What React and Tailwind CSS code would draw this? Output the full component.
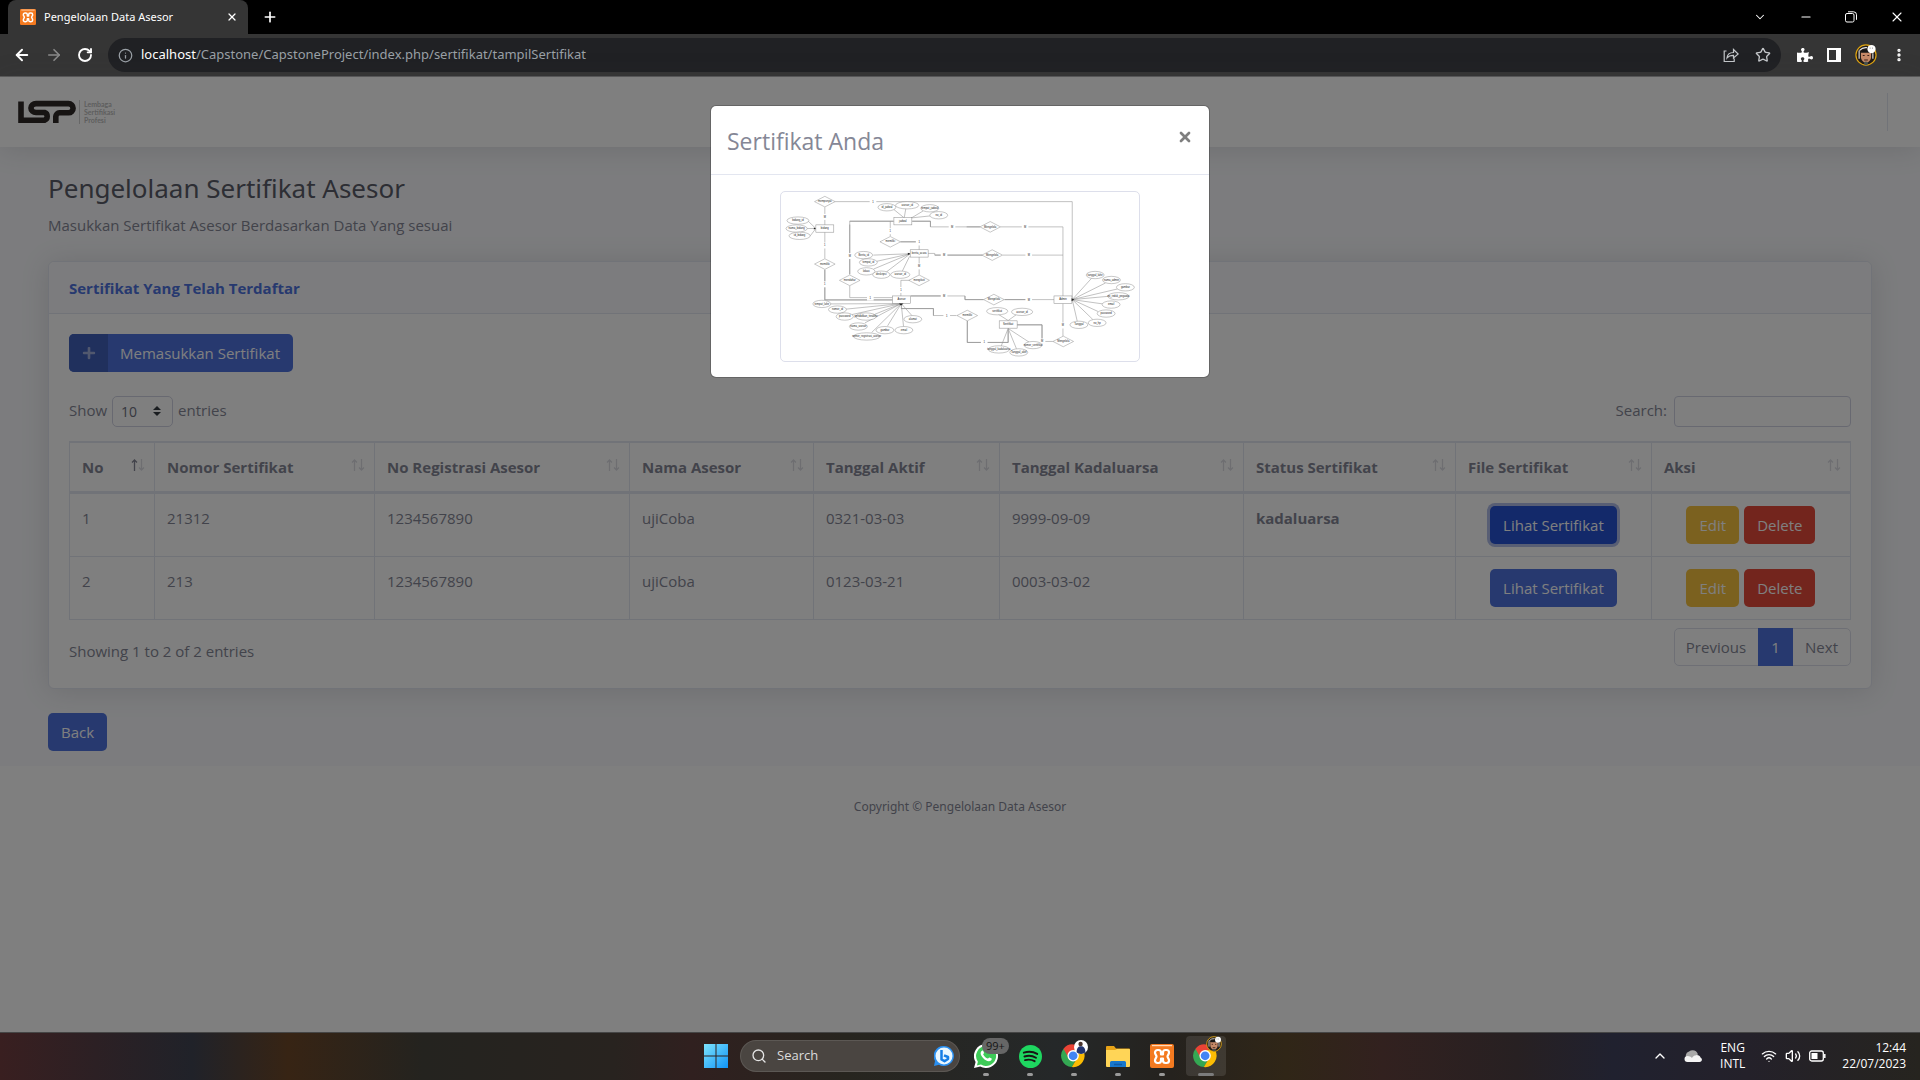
import React from "react";
import {
  ArrowLeft, ArrowRight, RotateCw, Info, X, Plus, Star, ChevronDown, ChevronUp, Minus,
  EllipsisVertical, Search, Wifi, Volume2,
} from "lucide-react";
import { FaPlus, FaPuzzlePiece } from "react-icons/fa";

const columns = [
  ["No", 85, true],
  ["Nomor Sertifikat", 220],
  ["No Registrasi Asesor", 255],
  ["Nama Asesor", 184],
  ["Tanggal Aktif", 186],
  ["Tanggal Kadaluarsa", 244],
  ["Status Sertifikat", 212],
  ["File Sertifikat", 196],
  ["Aksi", 199],
];

const rows = [
  { cells: ["1", "21312", "1234567890", "ujiCoba", "0321-03-03", "9999-09-09"], status: "kadaluarsa", active: true },
  { cells: ["2", "213", "1234567890", "ujiCoba", "0123-03-21", "0003-03-02"], status: "", active: false },
];

const lines = [
  "M404 303H1118V598M373 320V373M373 395V474M373 508V599H577M321 360L346 384L329 406M320 384H346",
  "M580 362H448V522M448 556V592H577M570 362V407M601 424H648M657 427V448M657 470V523M630 540H602V587",
  "M636 362H691V379H840M902 379H1090V587M684 459H704V464H847M909 464H1090",
  "M580 326L612 352L617 323M634 352L669 331M634 352L690 346",
  "M519 464L630 460L528 483M630 460L520 506M630 460L558 515M628 468L606 513",
  "M631 587H795V598H851M914 598H1064M603 610V625H700V646H770M802 662V727H925V685",
  "M603 610L390 611M603 610L434 627M603 610L455 643M603 610L524 642M603 610L494 668M603 610L514 697M603 610L562 677M603 610L610 679M603 610L636 647",
  "M895 642L925 661L950 643M952 674H1027V724H1060M1090 610V708",
  "M925 685L904 738M925 685L950 746M925 685L988 726",
  "M1118 598L1176 534M1118 598L1218 548M1118 598L1254 566M1118 598L1228 588M1118 598L1210 611M1118 598L1196 634M1118 598L1180 658M1118 598L1133 663",
];

const heavyLines = "M373 508V599H577M448 372V522M580 362H448M636 362H691V379M704 464H847M601 424H648M631 587H740M795 587V598H851M603 625H700V646M802 662V727H925V690M952 674H1027V724M800 379H840M914 598H990";

const diamonds = [
  [373, 303, "mempunyai"], [373, 491, "memiliki"], [448, 540, "mendaftar"], [570, 424, "memiliki"],
  [657, 540, "mengikuti"], [871, 379, "Mengelola"], [877, 464, "Mengelola"], [882, 598, "Mengelola"],
  [802, 646, "memiliki"], [1091, 724, "Mengelola"],
];

const boxes = [
  [373, 384, "bidang"], [608, 362, "jadwal"], [657, 459, "berita_acara"],
  [604, 598, "Asesor"], [1090, 598, "Admin"], [925, 673, "Sertifikat"],
];

const ellipses = [
  [292, 360, 33, "bidang_id"], [288, 384, 32, "nama_bidang"], [297, 406, 32, "id_bidang"],
  [560, 320, 27, "id_jadwal"], [621, 314, 35, "asesor_id"], [689, 323, 27, "tempat_jadwal"], [716, 344, 27, "no_id"],
  [490, 464, 27, "Berita_id"], [504, 486, 27, "tempat_id"], [498, 513, 26, "lokasi"], [543, 523, 26, "deskripsi"], [600, 523, 29, "asesor_id"],
  [364, 611, 27, "tempat_lahir"], [411, 628, 27, "nomor_id"], [433, 649, 26, "password"], [497, 649, 31, "pendidikan_terakhir"],
  [474, 679, 27, "nama_asesor"], [499, 709, 40, "nomor_registrasi_asesor"], [554, 690, 27, "gambar"], [611, 690, 27, "email"], [638, 657, 27, "alamat"],
  [1187, 524, 27, "tanggal_lahir"], [1236, 539, 27, "nama_admin"], [1278, 561, 27, "gambar"], [1257, 588, 32, "no_induk_pegawai"],
  [1235, 613, 27, "email"], [1220, 640, 27, "password"], [1193, 668, 27, "no_hp"], [1138, 674, 27, "Tanggal"],
  [892, 633, 32, "sertifikat"], [967, 635, 32, "asesor_id"], [897, 748, 32, "tanggal_kadaluarsa"],
  [957, 757, 27, "Tanggal_aktif"], [1000, 735, 27, "nomor_sertifikat"],
];

const marks = [
  [518, 303, "1"], [373, 349, "M"], [373, 435, "1"], [373, 552, "1"], [448, 467, "M"], [510, 592, "1"], [570, 392, "1"],
  [657, 426, "1"], [657, 498, "M"], [602, 569, "1"], [756, 379, "M"], [976, 379, "M"], [732, 464, "M"], [987, 464, "M"],
  [732, 587, "M"], [987, 598, "M"], [740, 646, "1"], [853, 727, "1"], [1027, 724, "M"], [1090, 676, "M"],
];

function Diagram() {
  return (
    <svg role="img" aria-label="Sertifikat" viewBox="241 274 1078 508" className="block h-auto w-full" fontFamily="Liberation Sans, sans-serif" fontSize="8" textAnchor="middle" fill="#222">
      <g fill="none" stroke="#8c8c8c" strokeWidth="1.6">
        {lines.map((d) => <path key={d} d={d} />)}
        <path d={heavyLines} strokeWidth="2.4" stroke="#959595" />
      </g>
      {marks.map(([x, y, t], i) => (
        <g key={i}>
          <rect x={x - 10} y={y - 9} width="20" height="18" fill="#fff" />
          <text x={x} y={y + 3}>{t}</text>
        </g>
      ))}
      {diamonds.map(([x, y, t], i) => (
        <g key={i}>
          <path d={`M${x - 31} ${y}L${x} ${y - 16}L${x + 31} ${y}L${x} ${y + 16}Z`} fill="#fff" stroke="#888" strokeWidth="1.4" />
          <text x={x} y={y + 2}>{t}</text>
        </g>
      ))}
      {ellipses.map(([x, y, r, t], i) => (
        <g key={i}>
          <ellipse cx={x} cy={y} rx={r} ry="11" fill="#fff" stroke="#888" strokeWidth="1.4" />
          <text x={x} y={y + 2}>{t}</text>
        </g>
      ))}
      {boxes.map(([x, y, t], i) => (
        <g key={i}>
          <rect x={x - 27} y={y - 11} width="54" height="22" fill="#fff" stroke="#888" strokeWidth="1.5" />
          <text x={x} y={y + 2}>{t}</text>
        </g>
      ))}
      <path d="M1116 594l8 4l-8 5zM596 610h14l-8 6zM623 457l7 3l-7 4zM340 381l6 3l-6 3z" fill="#222" />
    </svg>
  );
}

function XamppIcon({ className }) {
  return (
    <svg viewBox="0 0 24 24" className={className} aria-hidden="true">
      <rect width="24" height="24" rx="2" fill="#f47a20" />
      <rect x="2" y="1" width="20" height="1.2" fill="#ffd9b8" />
      <path d="M5 8.500A2.500 2.500 0 0 1 7.500 6H8.500A2.500 2.500 0 0 1 11 8.500V10.500H13V8.500A2.500 2.500 0 0 1 15.500 6H16.500A2.500 2.500 0 0 1 19 8.500C19 10.500 17.500 11 17.500 12.500S19 14.500 19 16.500A2.500 2.500 0 0 1 16.500 19H15.500A2.500 2.500 0 0 1 13 16.500V14.500H11V16.500A2.500 2.500 0 0 1 8.500 19H7.500A2.500 2.500 0 0 1 5 16.500C5 14.500 6.500 14 6.500 12.500S5 10.500 5 8.500Z" fill="#f47a20" stroke="#fff" strokeWidth="2.200" strokeLinejoin="round" />
    </svg>
  );
}

function ChromeIcon({ className, children }) {
  return (
    <svg viewBox="0 0 32 32" className={className} aria-hidden="true">
      <path d="M4 10A13 13 0 0 0 13.500 30.900L19.500 21Z" fill="#34a853" />
      <path d="M26.300 11.500A13 13 0 0 1 13.500 30.900L20.500 19L15 11.500Z" fill="#fbbc04" />
      <path d="M4 10A13 13 0 0 1 15 5C20 5 24.500 7.500 26.300 11.500H15L9.500 20Z" fill="#ea4335" />
      <circle cx="15" cy="18" r="6.500" fill="#fff" />
      <circle cx="15" cy="18" r="5" fill="#4285f4" />
      {children}
    </svg>
  );
}

function Face({ className }) {
  return (
    <svg viewBox="0 0 24 24" className={className} aria-hidden="true">
      <circle cx="12" cy="12" r="11" fill="#221c18" stroke="#e0a512" strokeWidth="1.300" />
      <path d="M4.500 7v9M19.500 10v6M5 7a9 9 0 0 1 8-3" stroke="#e8e8e8" strokeWidth="1.200" fill="none" />
      <path d="M6.500 9.500c1-3 10-3 11 0v5c0 3-3 6-5.500 6s-5.500-3-5.500-6z" fill="#c68a68" />
      <path d="M6.500 9.500C7 5 17 5 17.500 9.500z" fill="#171717" />
      <path d="M8.500 12.500h2M13.500 12.500h2M10 17.500h4" stroke="#3b2018" strokeWidth="1.200" />
      <path d="M9.500 20l2.500-1 2.500 1-1 3h-3z" fill="#4a5450" />
      <circle cx="18" cy="5.500" r="4.500" fill="#fff" />
      <path d="M16 4.500h1M18.500 4.500h1" stroke="#777" strokeWidth="1" />
    </svg>
  );
}

function TitleBar() {
  return (
    <header className="bg-black text-white">
      <div className="flex h-[34px] items-center pl-2">
        <div className="flex h-full w-60 items-center rounded-t-lg bg-[#353535] pl-3 pr-2.5">
          <XamppIcon className="size-4" />
          <span className="ml-2 flex-1 font-['Noto_Sans',sans-serif] text-[11px]">Pengelolaan Data Asesor</span>
          <button aria-label="Tutup tab"><X className="size-3" strokeWidth={2.500} /></button>
        </div>
        <button aria-label="Tab baru" className="ml-3.5"><Plus className="size-4" strokeWidth={2.500} /></button>
        <div className="ml-auto flex items-center gap-8 pr-[15px]">
          <button aria-label="Cari tab"><ChevronDown className="size-3.5" strokeWidth={1.800} /></button>
          <button aria-label="Perkecil"><Minus className="size-3.5" strokeWidth={1.800} /></button>
          <button aria-label="Pulihkan">
            <svg viewBox="0 0 12 12" className="size-3" fill="none" stroke="currentColor"><rect x=".5" y="2.500" width="8.500" height="8.500" rx="1.500" /><path d="M3 .8h5.500a3 3 0 0 1 3 3v5" /></svg>
          </button>
          <button aria-label="Tutup"><X className="size-4" strokeWidth={1.600} /></button>
        </div>
      </div>
      <div className="flex h-[43px] items-center border-b border-[#5a5a5a] bg-[#353535] px-[13px]">
        <button aria-label="Kembali"><ArrowLeft className="size-[18px]" strokeWidth={2.600} /></button>
        <button aria-label="Maju" className="ml-3.5 text-[#8a8a8a]"><ArrowRight className="size-[18px]" strokeWidth={2.200} /></button>
        <button aria-label="Muat ulang" className="ml-3.5"><RotateCw className="size-4" strokeWidth={2.800} /></button>
        <div className="ml-[15px] flex h-[34px] flex-1 items-center rounded-full bg-[#202124] pl-2.5 pr-2.5">
          <Info className="size-[15px] text-[#9aa0a6]" />
          <span className="ml-2 font-['Noto_Sans',sans-serif] text-[13px] text-[#9aa0a6]"><span className="text-white">localhost</span>/Capstone/CapstoneProject/index.php/sertifikat/tampilSertifikat</span>
          <div className="ml-auto flex items-center gap-4 text-[#c4c7ca]">
            <button aria-label="Bagikan">
              <svg viewBox="0 0 16 16" className="size-4" fill="none" stroke="currentColor" strokeWidth="1.200"><path d="M3.500 4H1.200v10.500h10V11.500M4 11c.3-4 3-5.500 6.500-5.500V2.500L15.200 7l-4.700 4V8.300C7.500 8.300 5.500 9 4 11z" /></svg>
            </button>
            <button aria-label="Tandai"><Star className="size-4" /></button>
          </div>
        </div>
        <div className="ml-4 flex items-center gap-3.5">
          <button aria-label="Ekstensi"><FaPuzzlePiece className="size-4" /></button>
          <button aria-label="Panel samping">
            <svg viewBox="0 0 14 14" className="size-3.5"><path fill="#fff" fillRule="evenodd" d="M0 0h14v14H0zM2 2v10h7V2z" /></svg>
          </button>
          <button aria-label="Profil"><Face className="size-[22px]" /></button>
          <button aria-label="Menu"><EllipsisVertical className="size-4" strokeWidth={3} /></button>
        </div>
      </div>
    </header>
  );
}

function Logo() {
  return (
    <div className="flex items-center" aria-label="LSP">
      <svg viewBox="0 0 58 24" className="h-6 w-[58px]" fill="none" stroke="#2e2827" strokeWidth="5.600">
        <path d="M3 1.500V20.200H26.500A3.700 4 0 0 0 26.500 12.500H18A5 4.400 0 0 1 18 3.600H50.500A4.600 4.600 0 0 1 50.500 12.800H41.500A4 4 0 0 0 37.800 16.500V23" />
      </svg>
      <div className="ml-[3px] h-6 w-px bg-[#cfcfcf]" />
      <div className="ml-1 font-[Lato,sans-serif] text-[7px] font-bold leading-[8px] text-[#bdbdbd]">
        <div>Lembaga</div><div>Sertifikasi</div><div>Profesi</div>
      </div>
    </div>
  );
}

function SortArrows({ active }) {
  return (
    <svg viewBox="0 0 14 12" className="mb-1 h-3 w-3.5 shrink-0" fill="none" aria-hidden="true">
      <path d="M3.500 12V1M1 3.500L3.500 1L6 3.500" stroke={active ? "#858796" : "#dcdde3"} strokeWidth="1.300" />
      <path d="M10.500 0V11M8 8.500L10.500 11L13 8.500" stroke="#dcdde3" strokeWidth="1.300" />
    </svg>
  );
}

function Page() {
  return (
    <div className="font-['Open_Sans',sans-serif] text-[15px] leading-6 text-[#858796]">
      <div className="relative z-10 flex h-[70px] items-center justify-between bg-white pl-[18px] pr-8 shadow-[0_2px_28px_rgba(58,59,69,0.15)]">
        <Logo />
        <div className="h-[38px] w-px bg-[#e3e6f0]" />
      </div>
      <main className="bg-[#f8f9fc] px-12 pb-[15px] pt-6">
        <h1 className="font-['Noto_Sans',sans-serif] text-[26px] leading-[34px] text-[#5a5c69]">Pengelolaan Sertifikat Asesor</h1>
        <p className="mt-2 mb-6 leading-6">Masukkan Sertifikat Asesor Berdasarkan Data Yang sesuai</p>
        <section className="rounded-md border border-[#e3e6f0] bg-white shadow-[0_2px_28px_rgba(58,59,69,0.15)]">
          <h2 className="flex h-[52px] items-center rounded-t-md border-b border-[#e3e6f0] bg-[#f8f9fc] px-5 font-bold text-[#4e73df]">Sertifikat Yang Telah Terdaftar</h2>
          <div className="px-5 pb-[22px] pt-5">
            <button className="flex h-[38px] items-stretch overflow-hidden rounded-[5px] bg-[#4e73df] text-white">
              <span className="flex w-[39px] items-center justify-center bg-[#4060bb] text-[#a3b0dd]"><FaPlus className="size-3.5" /></span>
              <span className="flex items-center pl-3 pr-[13px]">Memasukkan Sertifikat</span>
            </button>
            <div className="mt-6 flex items-start justify-between leading-7">
              <label className="flex items-start gap-[5px]">
                Show
                <span className="relative flex">
                  <select className="h-[31px] w-[61px] appearance-none rounded-[5px] border border-[#d1d3e2] bg-white pl-2 text-sm text-[#6e707e]"><option>10</option></select>
                  <svg viewBox="0 0 8 10" className="pointer-events-none absolute right-3 top-2.5 h-2.5 w-2" fill="#343a40"><path d="M0 4L4 0L8 4zM0 6L4 10L8 6z" /></svg>
                </span>
                entries
              </label>
              <label className="flex items-start gap-[7px]">Search:<input type="search" className="h-[31px] w-[177px] rounded-[4px] border border-[#d1d3e2] bg-white px-2 text-sm" /></label>
            </div>
            <table className="mt-3.5 w-full table-fixed border-collapse border border-[#e3e6f0] text-left">
              <colgroup>{columns.map(([n, w]) => <col key={n} style={{ width: `${w / 17.81}%` }} />)}</colgroup>
              <thead>
                <tr className="h-[50px] border-b-[3px] border-t-2 border-[#e3e6f0]">
                  {columns.map(([name, , active]) => (
                    <th key={name} className="border-x border-[#e3e6f0] pl-3 pr-[9px] font-bold">
                      <div className="flex items-center justify-between whitespace-nowrap">{name}<SortArrows active={active} /></div>
                    </th>
                  ))}
                </tr>
              </thead>
              <tbody>
                {rows.map((r) => (
                  <tr key={r.cells[0]} className="h-[63px] border-b border-[#e3e6f0] align-top">
                    {r.cells.map((c, i) => <td key={i} className="border-x border-[#e3e6f0] p-3">{c}</td>)}
                    <td className="border-x border-[#e3e6f0] p-3 font-bold">{r.status}</td>
                    <td className="border-x border-[#e3e6f0] p-3 text-center">
                      <button className={r.active ? "h-[38px] rounded-[5px] bg-[#2653d4] px-[13px] text-white ring-3 ring-[#b0bde8]" : "h-[38px] rounded-[5px] bg-[#4e73df] px-[13px] text-white"}>Lihat Sertifikat</button>
                    </td>
                    <td className="border-x border-[#e3e6f0] p-3">
                      <div className="flex justify-center gap-[5px]">
                        <button className="h-[38px] rounded-[5px] bg-[#f6c23e] px-[13px] text-white">Edit</button>
                        <button className="h-[38px] rounded-[5px] bg-[#e74a3b] px-[13px] text-white">Delete</button>
                      </div>
                    </td>
                  </tr>
                ))}
              </tbody>
            </table>
            <div className="mt-2 flex items-center justify-between">
              <p className="pt-2">Showing 1 to 2 of 2 entries</p>
              <nav className="flex h-[38px] rounded-[5px] border border-[#dddfeb]">
                <button className="pl-[11px] pr-3">Previous</button>
                <button className="-my-px w-[35px] bg-[#4e73df] text-white">1</button>
                <button className="px-3">Next</button>
              </nav>
            </div>
          </div>
        </section>
        <button className="mt-6 block h-[38px] rounded-[5px] bg-[#4e73df] px-[13px] text-white">Back</button>
      </main>
      <footer className="pt-[29px] text-center font-['Noto_Sans',sans-serif] text-[12px] leading-6">Copyright © Pengelolaan Data Asesor</footer>
    </div>
  );
}

function Modal() {
  return (
    <div className="absolute inset-0 z-20 bg-black/50 pt-7">
      <div role="dialog" aria-labelledby="modal-title" className="mx-auto w-[500px] rounded-md border border-black/20 bg-white bg-clip-padding font-['Open_Sans',sans-serif] text-[#858796]">
        <div className="flex items-start justify-between border-b border-[#e3e6f0] px-4 pb-[15px] pt-[17px]">
          <h5 id="modal-title" className="text-[23px] leading-9">Sertifikat Anda</h5>
          <button aria-label="Close" className="mt-1.5 text-[#7f7f7f]"><X className="size-4" strokeWidth={4} /></button>
        </div>
        <div className="px-4 pb-[15px] pt-4">
          <div className="mx-auto w-[360px] overflow-hidden rounded-[5px] border border-[#dddfeb]"><Diagram /></div>
        </div>
      </div>
    </div>
  );
}

function Slot({ children, active, label }) {
  return (
    <button aria-label={label} className={active ? "relative flex h-10 w-10 items-center justify-center rounded bg-white/10" : "relative flex h-10 w-10 items-center justify-center rounded"}>
      {children}
      <span className={active ? "absolute bottom-0 h-[3px] w-4 rounded-full bg-[#7c7c7c]" : "absolute bottom-0 h-[3px] w-1.5 rounded-full bg-[#9a9a9a]"} />
    </button>
  );
}

function Taskbar() {
  return (
    <footer className="flex h-12 items-center border-t border-[#454545] bg-[linear-gradient(90deg,#391f20_0%,#2c2024_5%,#202229_10%,#372414_15%,#24231f_22%,#28231f_32%,#30201f_36%,#27251f_44%,#252829_55%,#25221e_61%,#302617_67%,#32211f_72%,#272022_79%,#20212f_84%,#24212a_91%,#26241f_100%)] pb-px font-['Open_Sans',sans-serif] text-white">
      <div className="flex-1 pl-6" />
      <div className="flex items-center gap-1">
        <button aria-label="Start" className="mr-2">
          <svg viewBox="0 0 24 24" className="size-6"><defs><linearGradient id="win" x1="0" y1="0" x2="1" y2="1"><stop stopColor="#7de3fc" /><stop offset="1" stopColor="#1094f8" /></linearGradient></defs><path fill="url(#win)" d="M0 0h11.500v11.500H0zM12.500 0H24v11.500H12.500zM0 12.500h11.500V24H0zM12.500 12.500H24V24H12.500z" /></svg>
        </button>
        <label className="mr-0.5 flex h-8 w-[220px] items-center rounded-full border border-white/10 bg-[#4a4541] pl-2.5 pr-[5px]">
          <Search className="size-4 shrink-0 text-[#e4e4e4]" />
          <input aria-label="Search" placeholder="Search" className="ml-2.5 w-full min-w-0 bg-transparent text-[13px] outline-none placeholder:text-[#dcdcdc]" />
          <svg viewBox="0 0 20 20" className="size-5 shrink-0" aria-hidden="true"><path d="M10 0a10 10 0 1 1-5 18.700L0 20l1-5A10 10 0 0 1 10 0z" fill="#2a8ff0" /><circle cx="10" cy="10" r="8.500" fill="#eaf7ff" /><path d="M7.500 4v9.500l3 1.700 3.500-2.200v-2l-4-1.700" fill="none" stroke="#167ee6" strokeWidth="2.500" strokeLinejoin="round" /></svg>
        </label>
        <Slot label="WhatsApp">
          <svg viewBox="0 0 24 24" className="size-6" aria-hidden="true"><path d="M12 0a12 12 0 1 1-5.800 22.500L0 24l1.600-6A12 12 0 0 1 12 0z" fill="#fff" /><path d="M12 2a10 10 0 1 1-5 18.600L2.900 21.500l1-3.800A10 10 0 0 1 12 2z" fill="#3ecb58" /><path d="M8.300 6.500c.8-.2 1 .2 1.700 2.200.1.500-.9 1.300-.8 1.700 1 2 2.500 3.300 4.500 4.200.5.200 1.300-1.400 1.800-1.200l2.200 1.200c.3 2-1.500 2.800-3 2.700C11 17 6.700 12.500 6.600 9.300c0-1.200.8-2.500 1.700-2.800z" fill="#fff" /></svg>
          <span className="absolute left-4 top-0.5 rounded-full bg-[#666] px-1 text-[11px] leading-4 text-[#151515]">99+</span>
        </Slot>
        <Slot label="Spotify"><svg viewBox="0 0 24 24" className="size-[23px]" aria-hidden="true"><circle cx="12" cy="12" r="12" fill="#1ed760" /><path d="M5 8c5-1.500 10-1 14 1.300M5.700 12c4-1.200 8.500-.8 12 1.300M6.300 15.800c3.500-1 7-.6 10 1.100" fill="none" stroke="#191414" strokeWidth="2" strokeLinecap="round" /></svg></Slot>
        <Slot label="Chrome"><ChromeIcon className="mb-1 size-7 scale-100"><circle cx="24" cy="8" r="8" fill="#fff" /><circle cx="23.500" cy="4.500" r="2.500" fill="#4a342c" /><path d="M19 14c0-5 2-7 5-7s5 2 5 7c-3 2.500-7 2.500-10 0z" fill="#22346e" /></ChromeIcon></Slot>
        <Slot label="File Explorer"><svg viewBox="0 0 24 24" className="size-6" aria-hidden="true"><path d="M0 3a1 1 0 0 1 1-1h7l2 2.500h13a1 1 0 0 1 1 1V12H0z" fill="#e8a317" /><path d="M0 6h9l2-1h12a1 1 0 0 1 1 1v16a1 1 0 0 1-1 1H1a1 1 0 0 1-1-1z" fill="#ffd557" /><path d="M4 23v-4.500A1.500 1.500 0 0 1 5.500 17h13a1.500 1.500 0 0 1 1.500 1.500V23z" fill="#1877cc" /><path d="M8 20.500h8" stroke="#0f5ba6" strokeWidth="1.500" /></svg></Slot>
        <Slot label="XAMPP"><XamppIcon className="size-6" /></Slot>
        <Slot label="Chrome" active><span className="relative mb-1"><ChromeIcon className="size-7" /><Face className="absolute -top-1 left-3.5 size-4" /></span></Slot>
      </div>
      <div className="flex flex-1 items-center justify-end pr-3.5 text-[12px] leading-4">
        <button aria-label="Ikon tersembunyi"><ChevronUp className="size-4" /></button>
        <svg viewBox="0 0 18 12" className="ml-4 h-3 w-[18px]" aria-hidden="true"><path d="M4 9a4 4 0 0 1 1-7.500C8-1 13 0 14 4.500z" fill="#a9a9a9" /><path d="M3.500 12a3 3 0 0 1 0-6c2 0 3 .8 4.500 1.500C10 4 16 4 16.500 7.500 19 9 18 12 15.500 12z" fill="#f4f4f4" /></svg>
        <div className="ml-[18px] text-center">ENG<br />INTL</div>
        <Wifi className="ml-4 size-4" />
        <Volume2 className="ml-2 size-4" />
        <svg viewBox="0 0 17 12" className="ml-2 h-3 w-[17px]" aria-hidden="true"><rect x=".7" y="1" width="13.600" height="10" rx="2" fill="none" stroke="#fff" strokeWidth="1.300" /><rect x="2.500" y="3" width="6" height="6" fill="#fff" /><path d="M15.800 4v4" stroke="#fff" strokeWidth="1.500" /></svg>
        <div className="ml-4 text-right">12:44<br />22/07/2023</div>
      </div>
    </footer>
  );
}

export default function App() {
  return (
    <div className="flex min-h-screen flex-col">
      <TitleBar />
      <div className="relative flex-1 bg-white">
        <Page />
        <Modal />
      </div>
      <Taskbar />
    </div>
  );
}
